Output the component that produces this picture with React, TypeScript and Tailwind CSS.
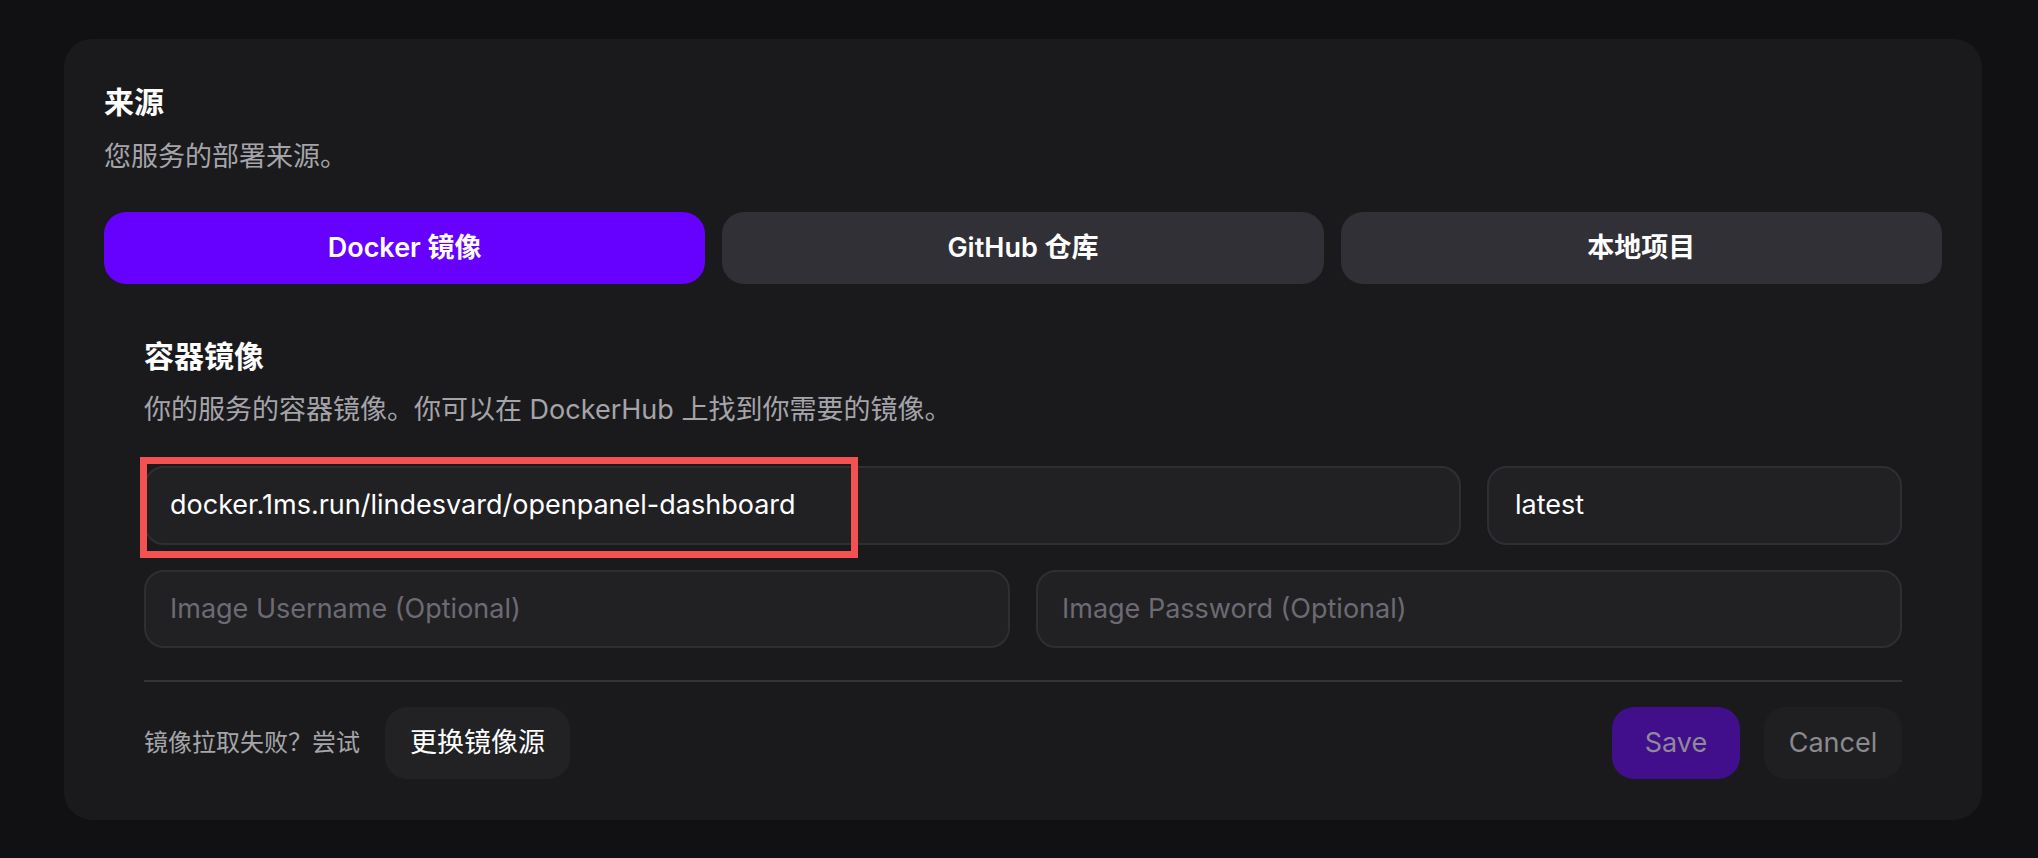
import React from "react";

const font = { fontFamily: '"Inter", "Noto Sans CJK SC", sans-serif' };

export default function App() {
  return (
    <div
      className="w-[2038px] h-[858px] bg-[#111113] pl-[64px] pr-[56px] pt-[39px] overflow-hidden"
      style={font}
    >
      <div className="w-[1918px] h-[781px] bg-[#1a1a1d] rounded-[28px] px-[40px] pt-[45px]">
        <div className="text-[30px] leading-[36px] font-bold text-white">来源</div>
        <div className="mt-[19px] text-[27px] leading-[36px] text-[#a5a4aa]">您服务的部署来源。</div>

        <div className="mt-[37px] grid grid-cols-3 gap-[17px]">
          <div className="h-[72px] rounded-[22px] bg-[#6600ff] flex items-center justify-center text-[27px] font-semibold text-white">
            Docker 镜像
          </div>
          <div className="h-[72px] rounded-[22px] bg-[#323037] flex items-center justify-center text-[27px] font-semibold text-white">
            GitHub 仓库
          </div>
          <div className="h-[72px] rounded-[22px] bg-[#323037] flex items-center justify-center text-[27px] font-semibold text-white">
            本地项目
          </div>
        </div>

        <div className="px-[40px]">
          <div className="mt-[54px] text-[30px] leading-[36px] font-bold text-white">容器镜像</div>
          <div className="mt-[18px] text-[27px] leading-[36px] text-[#a5a4aa]">
            你的服务的容器镜像。你可以在 DockerHub 上找到你需要的镜像。
          </div>

          <div className="relative mt-[38px] flex gap-[26px]">
            <div className="flex-1 h-[79px] rounded-[20px] bg-[#212124] border-2 border-[#2f2e34] flex items-center pl-[24px] text-[27px] text-white">
              docker.1ms.run/lindesvard/openpanel-dashboard
            </div>
            <div className="w-[415px] h-[79px] rounded-[20px] bg-[#212124] border-2 border-[#2f2e34] flex items-center pl-[26px] text-[27px] text-white">
              latest
            </div>
            <div className="absolute left-[-4px] top-[-9px] w-[718px] h-[101px] border-[7px] border-[#f25252]" />
          </div>

          <div className="mt-[25px] grid grid-cols-2 gap-[26px]">
            <div className="h-[78px] rounded-[20px] bg-[#212124] border-2 border-[#2f2e34] flex items-center pl-[24px] text-[27px] text-[#6d6a74]">
              Image Username (Optional)
            </div>
            <div className="h-[78px] rounded-[20px] bg-[#212124] border-2 border-[#2f2e34] flex items-center pl-[24px] text-[27px] text-[#6d6a74]">
              Image Password (Optional)
            </div>
          </div>

          <div className="mt-[32px] h-[2px] bg-[#323237]" />

          <div className="mt-[25px] flex items-center">
            <div className="text-[24px] text-[#a5a5aa]">镜像拉取失败？尝试</div>
            <div className="ml-[25px] h-[72px] px-[25px] rounded-[22px] bg-[#222225] flex items-center text-[27px] font-normal text-white">
              更换镜像源
            </div>
            <div className="flex-1" />
            <div className="w-[128px] h-[72px] rounded-[22px] bg-[#410f8b] flex items-center justify-center text-[27px] text-[#8f8a98]">
              Save
            </div>
            <div className="ml-[24px] w-[138px] h-[72px] rounded-[22px] bg-[#1f1f22] flex items-center justify-center text-[27px] text-[#8a8a8e]">
              Cancel
            </div>
          </div>
        </div>
      </div>
    </div>
  );
}
